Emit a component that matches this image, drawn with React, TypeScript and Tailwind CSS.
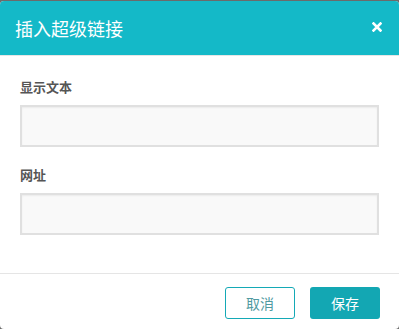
import React from 'react';

const font = { fontFamily: '"Noto Sans CJK SC", "Noto Sans", sans-serif' };

export default function App() {
  return (
    <div className="w-[399px] h-[329px] bg-[#6b6b6b] pt-px" style={font}>
      {/* Dialog */}
      <div className="h-[328px] bg-white rounded-[4px] overflow-hidden flex flex-col">
        <div className="h-[55px] bg-[#14b9c8] border-b border-[#e6e6e6] flex items-center justify-between pl-[15px] pr-[17px]">
          <span className="text-white text-[18px] leading-none">插入超级链接</span>
          <svg width="10" height="10" viewBox="0 0 10 10" className="mb-[2px]">
            <path d="M1.5 1.5 L8.5 8.5 M8.5 1.5 L1.5 8.5" stroke="#fff" strokeWidth="2.6" strokeLinecap="square" />
          </svg>
        </div>

        <div className="px-[20px] pt-[22px] pb-[38px]">
          <label className="block text-[13px] leading-[18px] font-bold text-[#555]">显示文本</label>
          <input className="mt-[9px] block w-full h-[42px] bg-[#f9f9f9] border-2 border-[#e0e0e0] outline-none shadow-[inset_0_1px_2px_rgba(0,0,0,0.06)]" />
          <label className="block mt-[19px] text-[13px] leading-[18px] font-bold text-[#555]">网址</label>
          <input className="mt-[9px] block w-full h-[42px] bg-[#f9f9f9] border-2 border-[#e0e0e0] outline-none shadow-[inset_0_1px_2px_rgba(0,0,0,0.06)]" />
        </div>

        <div className="border-t border-[#e5e5e5] pt-[13px] pr-[19px] flex justify-end gap-[15px]">
          <button className="w-[70px] h-[32px] rounded-[3px] border border-[#14a9b6] bg-white text-[14px] text-[#4f9aa1]">取消</button>
          <button className="w-[70px] h-[32px] rounded-[3px] bg-[#13a7b3] text-[14px] text-white">保存</button>
        </div>
      </div>
    </div>
  );
}
